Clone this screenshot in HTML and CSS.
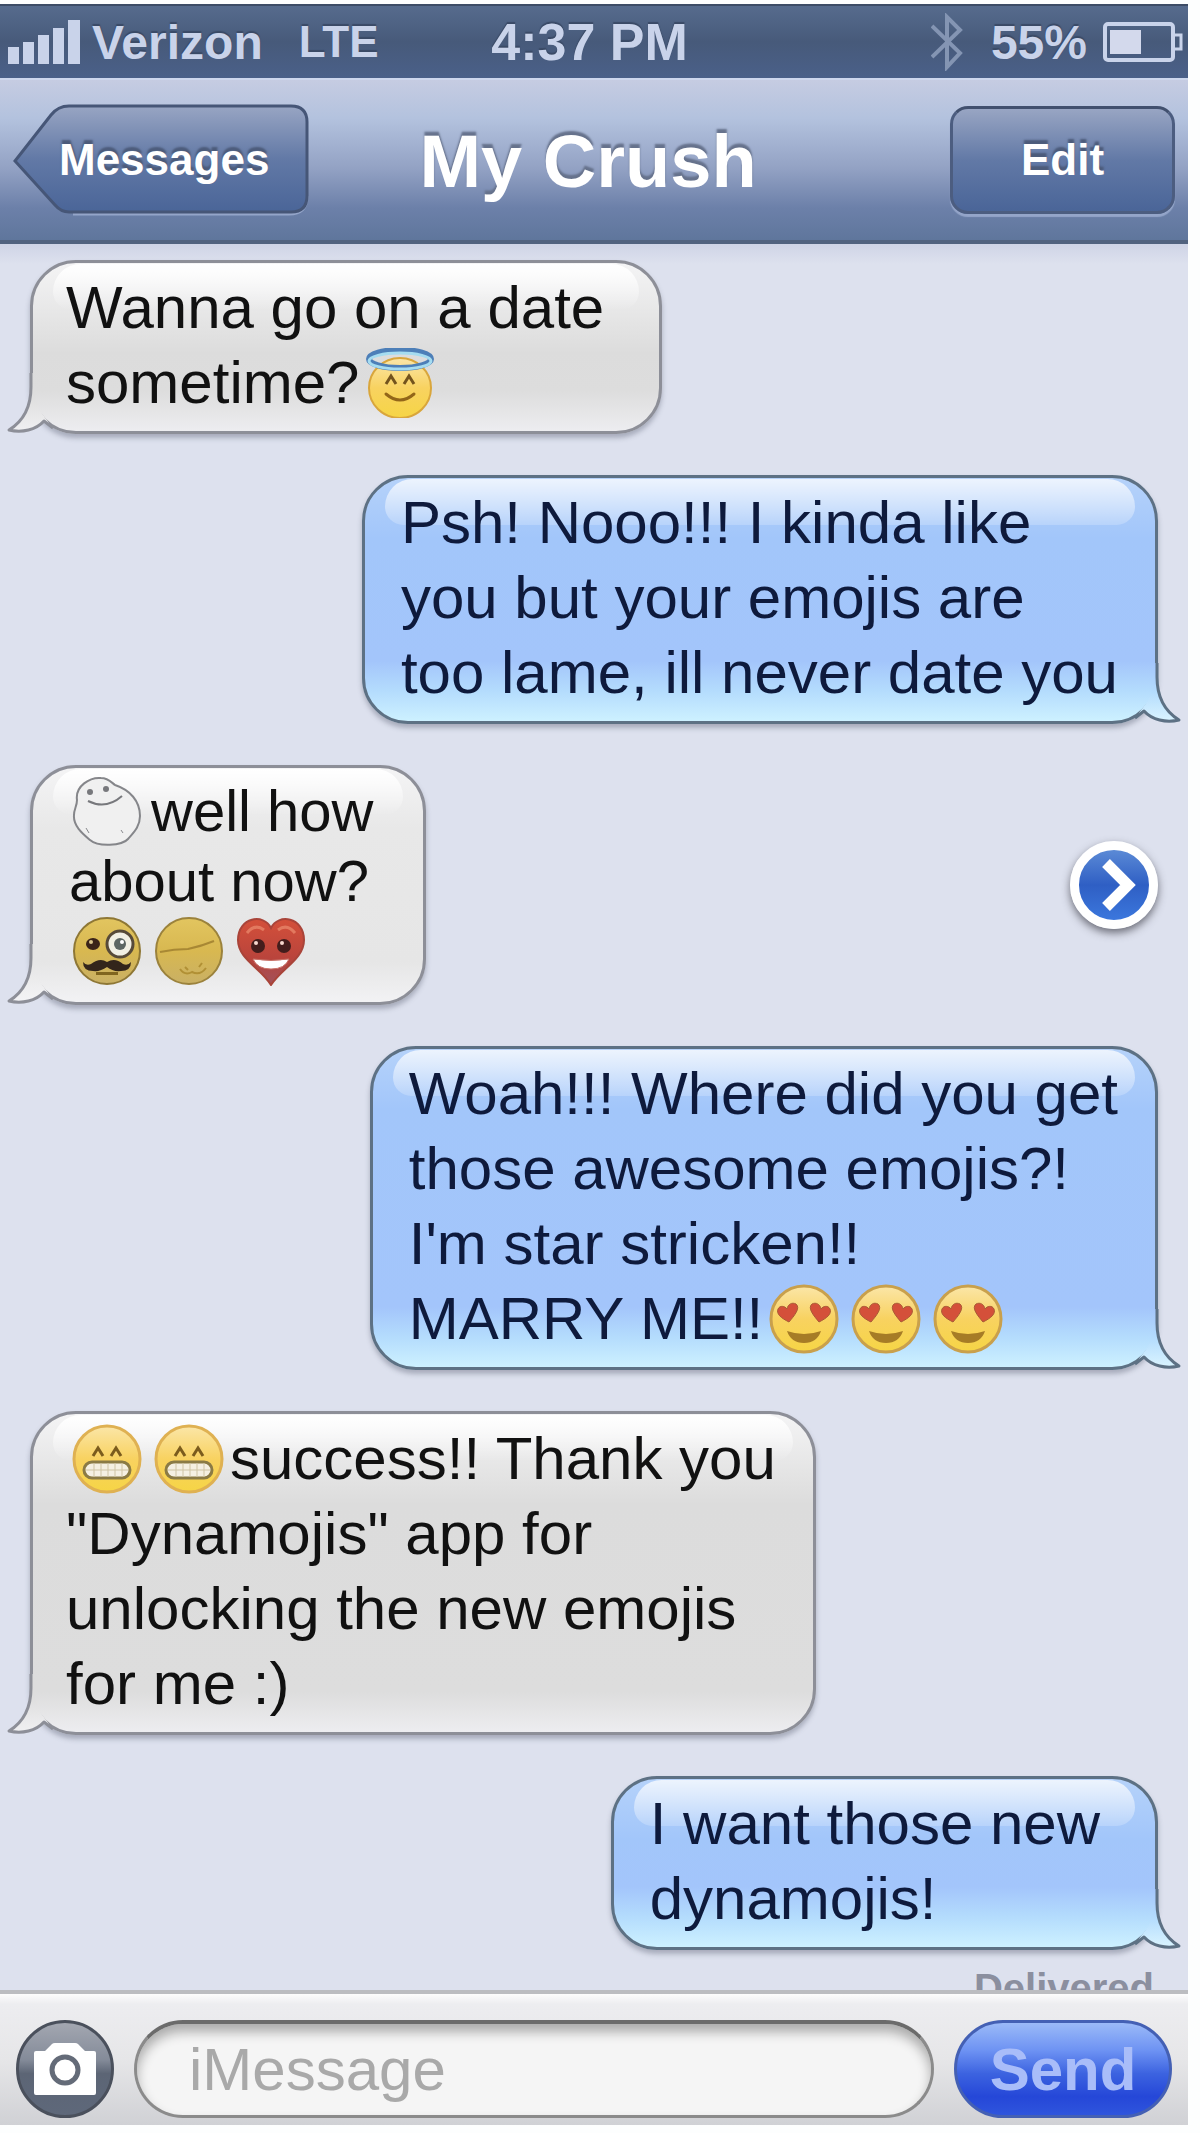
FILE: index.html
```
<!DOCTYPE html>
<html lang="en">
<head>
    <meta charset="UTF-8">
    <meta name="viewport" content="width=device-width, initial-scale=1.0">
    <title>My Crush</title>
    <link rel="stylesheet" href="styles.css">
</head>
<body>
    <!-- shared shapes -->
    <svg class="defs" width="0" height="0" aria-hidden="true">
        <defs>
            <linearGradient id="yellow" x1="0" y1="0" x2="0" y2="1">
                <stop offset="0" stop-color="#fbe6a8"/>
                <stop offset="0.5" stop-color="#f8d260"/>
                <stop offset="1" stop-color="#f6d545"/>
            </linearGradient>
            <linearGradient id="mustard" x1="0" y1="0" x2="0" y2="1">
                <stop offset="0" stop-color="#e2c560"/>
                <stop offset="0.5" stop-color="#d8b850"/>
                <stop offset="1" stop-color="#c9b065"/>
            </linearGradient>
            <linearGradient id="red" x1="0" y1="0" x2="0" y2="1">
                <stop offset="0" stop-color="#d4503a"/>
                <stop offset="0.6" stop-color="#b9443c"/>
                <stop offset="1" stop-color="#a0525c"/>
            </linearGradient>
            <linearGradient id="backFill" x1="0" y1="0" x2="0" y2="1">
                <stop offset="0" stop-color="#98a5c3"/>
                <stop offset="0.5" stop-color="#6279a6"/>
                <stop offset="1" stop-color="#4a6598"/>
            </linearGradient>
            <linearGradient id="grayTail" x1="0" y1="0" x2="0" y2="1">
                <stop offset="0" stop-color="#dddddd"/>
                <stop offset="0.4" stop-color="#dedede"/>
                <stop offset="1" stop-color="#f0f0f2"/>
            </linearGradient>
            <linearGradient id="lightTail" x1="0" y1="0" x2="0" y2="1">
                <stop offset="0" stop-color="#e6e6e6"/>
                <stop offset="0.4" stop-color="#e7e7e7"/>
                <stop offset="1" stop-color="#f4f4f6"/>
            </linearGradient>
            <linearGradient id="blueTail" x1="0" y1="0" x2="0" y2="1">
                <stop offset="0" stop-color="#a3c5fb"/>
                <stop offset="0.5" stop-color="#b4dcfd"/>
                <stop offset="1" stop-color="#daf4ff"/>
            </linearGradient>
        </defs>

        <symbol id="angel" viewBox="0 0 70 70">
            <ellipse cx="35" cy="40" rx="31" ry="30" fill="url(#yellow)" stroke="#d9a63c" stroke-width="2"/>
            <ellipse cx="35" cy="11" rx="31" ry="9" fill="none" stroke="#4d7fb8" stroke-width="6"/>
            <ellipse cx="35" cy="13" rx="31" ry="8" fill="none" stroke="#a5dcf0" stroke-width="3"/>
            <path d="M21 36l5-8 5 8M39 36l5-8 5 8" fill="none" stroke="#73531d" stroke-width="3"/>
            <path d="M21 46q14 12 28 0" fill="none" stroke="#936619" stroke-width="3" stroke-linecap="round"/>
        </symbol>

        <symbol id="ghost" viewBox="0 0 70 70">
            <path d="M5 24C3 10 18 1 29 2c7 0 10 4 14 7 15 5 25 16 25 31 0 11-7 17-12 23-6 7-30 8-38 1C11 58 1 50 2 39c0-6 3-9 3-15z" fill="#f0f0f0" stroke="#85868a" stroke-width="2"/>
            <circle cx="18" cy="16" r="3" fill="#77787c"/>
            <circle cx="34" cy="13" r="3" fill="#77787c"/>
            <path d="M16 25q18 9 34-5" fill="none" stroke="#77787c" stroke-width="2"/>
            <path d="M14 52l3 5M49 54l2 3" stroke="#88898d" stroke-width="1"/>
        </symbol>

        <symbol id="monocle" viewBox="0 0 70 70">
            <circle cx="35" cy="35" r="33" fill="url(#mustard)" stroke="#8e7735" stroke-width="2"/>
            <ellipse cx="21" cy="28" rx="7" ry="6" fill="#3b2419"/>
            <circle cx="19" cy="26" r="2" fill="#d9c58c"/>
            <circle cx="48" cy="28" r="13" fill="#f1efe4" stroke="#574a39" stroke-width="3"/>
            <circle cx="48" cy="28" r="6" fill="#5c6563"/>
            <circle cx="50" cy="26" r="2" fill="#fff"/>
            <path d="M11 46q3 4 8 2 9-7 16-2 8-5 16 2 5 2 8-2 0 9-10 9-8 1-14-4-7 5-14 4-10 0-10-9z" fill="#33251b"/>
            <path d="M24 56h22v3H24z" fill="#80651f"/>
        </symbol>

        <symbol id="sleepy" viewBox="0 0 70 70">
            <circle cx="35" cy="35" r="33" fill="url(#mustard)" stroke="#9b823c" stroke-width="2"/>
            <path d="M6 36q14-3 28-3 14-3 26-8" fill="none" stroke="#a88834" stroke-width="2"/>
            <path d="M26 53q5 7 12 3 8 4 14-4M31 51l3 3M45 51l3-4" fill="none" stroke="#b19035" stroke-width="2"/>
        </symbol>

        <symbol id="heart" viewBox="0 0 70 70">
            <path d="M35 12C42-3 68 1 68 24c0 19-22 28-33 45C25 52 2 43 2 24 2 1 28-3 35 12z" fill="url(#red)" stroke="#a94439" stroke-width="2"/>
            <path d="M11 17q8-10 17-3M42 14q9-7 17 3" fill="none" stroke="#e2795f" stroke-width="3"/>
            <circle cx="22" cy="30" r="7" fill="#431d1c"/>
            <circle cx="48" cy="30" r="7" fill="#431d1c"/>
            <circle cx="20" cy="27" r="2" fill="#f6d9cf"/>
            <circle cx="46" cy="27" r="2" fill="#f6d9cf"/>
            <path d="M17 43q18 3 36 0-4 10-18 10T17 43z" fill="#fff" stroke="#c97267" stroke-width="1"/>
        </symbol>

        <symbol id="love" viewBox="0 0 70 70">
            <circle cx="35" cy="35" r="33" fill="url(#yellow)" stroke="#c9a04c" stroke-width="3"/>
            <path d="M20 38C12 34 7 30 9 25c2-4 7-3 9 0 1-5 5-7 9-5 5 4-2 12-7 18z" fill="#d4503a" stroke="#a95b35" stroke-width="1"/>
            <path d="M50 38c8-4 13-8 11-13-2-4-7-3-9 0-1-5-5-7-9-5-5 4 2 12 7 18z" fill="#d4503a" stroke="#a95b35" stroke-width="1"/>
            <path d="M18 47q17 6 34 0-4 12-17 12T18 47z" fill="#a67c26"/>
        </symbol>

        <symbol id="grin" viewBox="0 0 70 70">
            <circle cx="35" cy="35" r="33" fill="url(#yellow)" stroke="#dfb152" stroke-width="3"/>
            <path d="M21 32l5-8 5 8M39 32l5-8 5 8" fill="none" stroke="#7b5c1d" stroke-width="3"/>
            <rect x="12" y="38" width="46" height="16" rx="8" fill="#f5f0e2" stroke="#8b7b45" stroke-width="3"/>
            <path d="M14 46h42M22 39v14M29 39v14M36 39v14M43 39v14M50 39v14" stroke="#cfc4a4" stroke-width="1"/>
        </symbol>

        <!-- bubble tail, left hand version -->
        <symbol id="tail" viewBox="0 0 54 64">
            <path class="tail-fill" d="M24 0V14C24 36 16 49 3 57C16 60 30 57 38 48L43 53C46 50 34 42 31 30Q27 18 27 0Z"/>
            <path d="M25 0V14C25 36 16 49 3 57C16 60 30 57 38 48Q42 51 47 55" fill="none" stroke-width="3" stroke-linejoin="round"/>
        </symbol>
    </svg>

    <div class="phone">
        <div class="status-bar">
            <div class="carrier">
                <svg class="signal" width="72" height="44" viewBox="0 0 72 44" fill="#c9d3ea">
                    <rect x="0" y="27" width="11" height="17"/>
                    <rect x="15" y="22" width="11" height="22"/>
                    <rect x="30" y="15" width="11" height="29"/>
                    <rect x="45" y="8" width="11" height="36"/>
                    <rect x="60" y="0" width="12" height="44"/>
                </svg>
                <span>Verizon</span>
                <span class="network">LTE</span>
            </div>
            <div class="clock">4:37 PM</div>
            <div class="power">
                <svg class="bluetooth" width="32" height="58" viewBox="0 0 32 58" fill="none" stroke="#8495b3" stroke-width="4">
                    <path d="M1 13L29 40 16 54V4L29 17 1 44"/>
                </svg>
                <span>55%</span>
                <svg class="battery" width="80" height="40" viewBox="0 0 80 40">
                    <rect x="2" y="2" width="68" height="36" rx="3" fill="none" stroke="#c9d3ea" stroke-width="4"/>
                    <rect x="7" y="8" width="31" height="24" fill="#d3d9ec"/>
                    <path d="M71 13h7v14h-7" fill="none" stroke="#c9d3ea" stroke-width="3"/>
                </svg>
            </div>
        </div>

        <header class="nav">
            <button type="button" class="nav-button back">
                <svg class="back-shape" width="296" height="112" viewBox="0 0 296 112">
                    <path d="M60 110H276Q294 110 294 92" fill="none" stroke="#94a5c9" stroke-width="3"/>
                    <path d="M56 2H278Q294 2 294 18V92Q294 108 278 108H56Q48 108 42 101L2 57 38 11Q45 2 56 2Z" fill="url(#backFill)" stroke="#465677" stroke-width="3"/>
                </svg>
                <span>Messages</span>
            </button>
            <h1>My Crush</h1>
            <button type="button" class="nav-button edit">Edit</button>
        </header>

        <main class="chat">
            <div class="row">
                <div class="bubble gray roomy">
                    <svg class="tail"><use href="#tail"/></svg>
                    <p>Wanna go on a date<br>sometime?<svg class="emoji"><use href="#angel"/></svg></p>
                </div>
            </div>
            <div class="row sent">
                <div class="bubble blue">
                    <svg class="tail"><use href="#tail"/></svg>
                    <p>Psh! Nooo!!! I kinda like<br>you but your emojis are<br>too lame, ill never date you</p>
                </div>
            </div>
            <div class="row">
                <div class="bubble gray light">
                    <svg class="tail"><use href="#tail"/></svg>
                    <p><svg class="emoji"><use href="#ghost"/></svg>well how<br>about now?<br><svg class="emoji"><use href="#monocle"/></svg><svg class="emoji"><use href="#sleepy"/></svg><svg class="emoji"><use href="#heart"/></svg></p>
                </div>
                <button type="button" class="more" aria-label="Details">
                    <svg width="70" height="70" viewBox="0 0 70 70">
                        <path d="M27 13l22 22-22 22" fill="none" stroke="#fff" stroke-width="11"/>
                    </svg>
                </button>
            </div>
            <div class="row sent">
                <div class="bubble blue">
                    <svg class="tail"><use href="#tail"/></svg>
                    <p>Woah!!! Where did you get<br>those awesome emojis?!<br>I'm star stricken!!<br>MARRY ME!!<svg class="emoji"><use href="#love"/></svg><svg class="emoji"><use href="#love"/></svg><svg class="emoji"><use href="#love"/></svg></p>
                </div>
            </div>
            <div class="row">
                <div class="bubble gray">
                    <svg class="tail"><use href="#tail"/></svg>
                    <p><svg class="emoji"><use href="#grin"/></svg><svg class="emoji"><use href="#grin"/></svg>success!! Thank you<br>"Dynamojis" app for<br>unlocking the new emojis<br>for me :)</p>
                </div>
            </div>
            <div class="row sent">
                <div class="bubble blue roomy">
                    <svg class="tail"><use href="#tail"/></svg>
                    <p>I want those new<br>dynamojis!</p>
                </div>
            </div>
            <div class="receipt">Delivered</div>
        </main>

        <form class="composer">
            <button type="button" class="camera" aria-label="Camera">
                <svg width="62" height="52" viewBox="0 0 62 52">
                    <path d="M2 8h9l7-7q1-1 3-1h20q2 0 3 1l7 7h9q2 0 2 2v40q0 2-2 2H2q-2 0-2-2V10q0-2 2-2z" fill="#fff"/>
                    <circle cx="31" cy="27" r="13" fill="#fff" stroke="#646b78" stroke-width="5"/>
                </svg>
            </button>
            <input type="text" class="field" placeholder="iMessage" aria-label="iMessage">
            <button type="button" class="send">Send</button>
        </form>
    </div>
</body>
</html>
```
FILE: styles.css
```
* {
    box-sizing: border-box;
}
body {
    margin: 0;
    padding: 4px 12px 8px 0;
    height: 100vh;
    background: #fdfefe;
    font-family: "Liberation Sans", Arial, Helvetica, sans-serif;
}
button {
    font-family: inherit;
    cursor: pointer;
    padding: 0;
}
svg {
    flex-shrink: 0;
}
.defs {
    position: absolute;
}
.phone {
    height: 100%;
    display: flex;
    flex-direction: column;
}

/* status bar */
.status-bar {
    display: grid;
    grid-template-columns: 1fr auto 1fr;
    align-items: center;
    height: 74px;
    padding: 0 5px 0 8px;
    border-top: 2px solid #3d4c66;
    background: linear-gradient(#566b8d, #475a7a 50%, #4a6089);
    color: #c9d3ea;
    font-size: 48px;
    font-weight: bold;
    text-shadow: 0 -2px 1px #3a4a66;
}
.carrier,
.power {
    display: flex;
    align-items: center;
}
.power {
    justify-content: flex-end;
}
.signal {
    margin-right: 12px;
}
.network {
    margin-left: 36px;
    font-size: 44px;
}
.clock {
    padding-right: 12px;
    font-size: 52px;
}
.bluetooth {
    margin-right: 28px;
}
.battery {
    margin-left: 16px;
}

/* title bar */
.nav {
    display: grid;
    grid-template-columns: 1fr auto 1fr;
    align-items: center;
    height: 166px;
    padding: 0 13px;
    border-top: 2px solid #cdd7ee;
    border-bottom: 4px solid #52637f;
    background: linear-gradient(#c6cce2, #b3c2de 24%, #93a2c4 55%, #6c80a9 80%, #5f769c);
}
.nav h1 {
    margin: 0;
    padding: 4px 12px 0 0;
    color: #fff;
    font-size: 74px;
    line-height: 84px;
    text-shadow: 0 -4px 2px #66728c;
}
.nav-button {
    color: #fff;
    font-size: 44px;
    font-weight: bold;
    text-shadow: 0 -4px 2px #4c5b7a;
}
.back {
    position: relative;
    width: 296px;
    height: 112px;
    border: 0;
    background: none;
    text-align: left;
}
.back span {
    position: relative;
    padding-left: 46px;
}
.back-shape {
    position: absolute;
    top: 0;
    left: 0;
}
.edit {
    justify-self: end;
    width: 225px;
    height: 108px;
    border: 3px solid #4c5d80;
    border-top-color: #41506e;
    border-radius: 18px;
    background: linear-gradient(#98a5c3, #6279a6 50%, #4a6598);
    box-shadow: 0 3px 1px #94a5c9;
}

/* conversation */
.chat {
    flex: 1;
    min-height: 0;
    overflow: hidden;
    display: flex;
    flex-direction: column;
    gap: 41px;
    padding: 16px 30px 0;
    background: linear-gradient(#cfd4e6, #dde1ee 20px);
}
.row {
    display: flex;
    align-items: center;
    justify-content: space-between;
}
.sent {
    justify-content: flex-end;
}
.bubble {
    position: relative;
    padding: 7px 37px 11px 33px;
    border: 3px solid #8d8f98;
    border-radius: 46px;
    color: #111;
    font-size: 60px;
    line-height: 75px;
    white-space: nowrap;
    box-shadow: 0 4px 5px rgba(70, 75, 95, 0.35);
}
.bubble p {
    position: relative;
    margin: 0;
}
.roomy {
    padding-right: 55px;
}
.gray {
    background: linear-gradient(#f4f4f5, #e4e4e4 60px, #dcdcdc 90px, #dddddd calc(100% - 40px), #ededf0);
}
.blue {
    padding-left: 36px;
    border-color: #5d7184;
    background: linear-gradient(#b5d2fa, #a2c6fa 60px, #a3c5fb calc(100% - 60px), #b4dcfd calc(100% - 30px), #cdf1ff);
    color: #0e1a3c;
}
.light {
    padding: 8px 50px 16px 36px;
    background: linear-gradient(#f4f4f5, #e8e8e8 60px, #e6e6e6 calc(100% - 40px), #f2f2f4);
    font-size: 58px;
    line-height: 70px;
}
.light .emoji {
    margin-left: 3px;
    margin-right: 9px;
}
/* gloss along the top edge */
.bubble::before {
    content: "";
    position: absolute;
    top: 1px;
    left: 20px;
    right: 20px;
    height: 46px;
    border-radius: 30px 30px 20px 20px;
    background: linear-gradient(#fff, rgba(255, 255, 255, 0));
}
.blue::before {
    background: linear-gradient(rgba(255, 255, 255, 0.75), rgba(255, 255, 255, 0.2));
}
.tail {
    position: absolute;
    left: -27px;
    bottom: -6px;
    width: 54px;
    height: 64px;
    fill: url(#grayTail);
    stroke: #8d8f98;
}
.light .tail {
    fill: url(#lightTail);
}
.blue .tail {
    left: auto;
    right: -27px;
    transform: scaleX(-1);
    fill: url(#blueTail);
    stroke: #5d7184;
}
.tail-fill {
    stroke: none;
}
.emoji {
    width: 70px;
    height: 70px;
    margin: 0 6px;
    vertical-align: -15px;
    overflow: visible;
}
.more {
    display: flex;
    align-items: center;
    justify-content: center;
    width: 88px;
    height: 88px;
    border: 9px solid #fff;
    border-radius: 50%;
    background: linear-gradient(#5b8ad6, #2f5fc4 50%, #3b77dd);
    box-shadow: 0 4px 8px rgba(60, 60, 70, 0.7);
}
.receipt {
    margin-top: -26px;
    padding-right: 4px;
    color: #8b8f9f;
    font-size: 40px;
    line-height: 46px;
    font-weight: bold;
    text-align: right;
}

/* composer */
.composer {
    display: flex;
    align-items: flex-start;
    gap: 20px;
    height: 135px;
    padding: 26px 16px 0;
    border-top: 4px solid #bcbdc1;
    background: linear-gradient(#fdfdfd, #ededf0 10px, #e6e6e8 50%, #d0d1d5);
}
.camera {
    display: flex;
    align-items: center;
    justify-content: center;
    flex-shrink: 0;
    width: 98px;
    height: 98px;
    border: 3px solid #4a505c;
    border-radius: 50%;
    background: linear-gradient(#a3a7b1, #848b99 40%, #5c6575 55%, #5e687a);
}
.field {
    flex: 1;
    min-width: 0;
    height: 98px;
    padding: 0 52px;
    border: 3px solid #8b8b8b;
    border-top: 4px solid #6b6b6b;
    border-radius: 49px;
    background: #f5f5f5;
    box-shadow: inset 0 8px 12px rgba(0, 0, 0, 0.3);
    color: #222;
    font-family: inherit;
    font-size: 60px;
}
.field::placeholder {
    color: #a9a9a9;
    opacity: 1;
}
.send {
    flex-shrink: 0;
    width: 218px;
    height: 98px;
    border: 3px solid #4460b4;
    border-radius: 49px;
    background: linear-gradient(#9bbaf8, #6d92f3 30%, #3c63e0 55%, #2547d8 80%, #2f55dd);
    color: #a9bdf9;
    font-size: 60px;
    font-weight: bold;
}
```
